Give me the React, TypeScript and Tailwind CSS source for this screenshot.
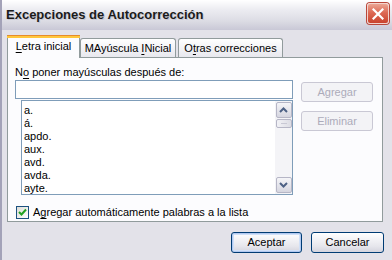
import React from "react";

const U = ({ children }: { children: React.ReactNode }) => (
  <span className="underline underline-offset-[2px] decoration-[1px]">{children}</span>
);

function ArrowUp() {
  return (
    <svg width="9" height="6" viewBox="0 0 9 6">
      <path d="M1 5 L4.5 1.5 L8 5" fill="none" stroke="#4D6185" strokeWidth="2" />
    </svg>
  );
}
function ArrowDown() {
  return (
    <svg width="9" height="6" viewBox="0 0 9 6">
      <path d="M1 1 L4.5 4.5 L8 1" fill="none" stroke="#4D6185" strokeWidth="2" />
    </svg>
  );
}

export default function App() {
  const items = ["a.", "á.", "apdo.", "aux.", "avd.", "avda.", "ayte."];
  return (
    <div
      className="w-[392px] h-[260px] overflow-hidden bg-[#E3E2E9] flex flex-col text-[11px] text-black border-l-[2px] border-l-[#A3A2B8]"
      style={{ fontFamily: '"Liberation Sans", Arial, sans-serif' }}
    >
      {/* Title bar */}
      <div className="h-[30px] flex items-center justify-between pl-[4px] pr-[3px] bg-[linear-gradient(to_bottom,#FFFFFF_0%,#EDEDF2_30%,#DCDCE4_70%,#C9C8D6_100%)]">
        <span
          className="text-[13px] font-bold text-[#1B1B1B]"
          style={{ textShadow: "1px 1px 0 #C8C8D2" }}
        >
          Excepciones de Autocorrección
        </span>
        <div className="w-[22px] h-[21px] mb-[3px] rounded-[3px] border border-[#F3D3CC] bg-[linear-gradient(to_bottom,#EBA593_0%,#DD6A55_45%,#C9432D_100%)] flex items-center justify-center shadow-[0_0_0_1px_#B9473A]">
          <svg width="12" height="12" viewBox="0 0 12 12">
            <path d="M1.5 1.5 L10.5 10.5 M10.5 1.5 L1.5 10.5" stroke="#FFFFFF" strokeWidth="2.2" strokeLinecap="square" />
          </svg>
        </div>
      </div>

      {/* Tabs */}
      <div className="mt-[5px] h-[22px] flex items-end pl-[5px]">
        <div className="relative z-10 -mb-[1px] h-[23px] w-[73px] bg-[#FCFCFE] border-x border-[#919B9C] flex flex-col">
          <div className="h-[1px] bg-[#E68B2C] -mx-[1px] rounded-t-[2px]" />
          <div className="h-[2px] bg-[#FFC73C] -mx-[1px]" />
          <div className="flex-1 flex items-center justify-center pb-[3px]">
            <span><U>L</U>etra inicial</span>
          </div>
        </div>
        <div className="h-[19px] w-[96px] ml-0 border border-b-0 border-[#919B9C] rounded-t-[3px] bg-[linear-gradient(to_bottom,#FFFFFF,#E8E8EE)] flex items-center justify-center">
          <span>MAyúscula <U>I</U>Nicial</span>
        </div>
        <div className="h-[19px] w-[105px] ml-[2px] border border-b-0 border-[#919B9C] rounded-t-[3px] bg-[linear-gradient(to_bottom,#FFFFFF,#E8E8EE)] flex items-center justify-center">
          <span>O<U>t</U>ras correcciones</span>
        </div>
      </div>

      {/* Panel */}
      <div className="ml-[5px] w-[376px] h-[165px] border border-[#919B9C] bg-[#FCFCFE] flex flex-col">
        <div className="mt-[8px] ml-[7px] h-[13px] leading-[13px]">
          N<U>o</U> poner mayúsculas después de:
        </div>
        <div className="flex mt-[1px]">
          <div className="ml-[7px] flex flex-col">
            <div className="w-[278px] h-[19px] border border-[#7F9DB9] bg-white" />
            <div className="ml-[6px] mt-[1px] w-[272px] h-[95px] border border-[#7F9DB9] bg-white flex">
              <div className="flex-1 pt-[3px] pl-[2px]">
                {items.map((it) => (
                  <div key={it} className="h-[13px] leading-[13px]">
                    {it}
                  </div>
                ))}
              </div>
              <div className="w-[17px] bg-[#F4F4F7] flex flex-col items-center py-[1px]">
                <div className="w-[16px] h-[16px] rounded-[2px] border border-[#B6B6C6] bg-[linear-gradient(to_bottom,#F5F5F8,#D6D6E0)] flex items-center justify-center">
                  <ArrowUp />
                </div>
                <div className="mt-[1px] w-[16px] h-[9px] rounded-[2px] border border-[#B6B6C6] bg-[linear-gradient(to_right,#F2F2F6,#DCDCE4)] flex flex-col items-center justify-center gap-[1px]">
                  <div className="w-[6px] h-[1px] bg-[#C8C8D4]" />
                </div>
                <div className="flex-1" />
                <div className="w-[16px] h-[16px] rounded-[2px] border border-[#B6B6C6] bg-[linear-gradient(to_bottom,#F5F5F8,#D6D6E0)] flex items-center justify-center">
                  <ArrowDown />
                </div>
              </div>
            </div>
          </div>
          <div className="ml-[8px] mt-[2px] flex flex-col gap-[9px]">
            <div className="w-[72px] h-[20px] rounded-[3px] border border-[#C9C8D4] bg-[#F3F3F6] text-[#ACABBA] flex items-center justify-center">
              Agregar
            </div>
            <div className="w-[72px] h-[20px] rounded-[3px] border border-[#C9C8D4] bg-[#F3F3F6] text-[#ACABBA] flex items-center justify-center">
              Eliminar
            </div>
          </div>
        </div>
        <div className="mt-[9px] ml-[8px] flex items-center">
          <div className="w-[13px] h-[13px] border border-[#1C5180] bg-[linear-gradient(135deg,#DCDCD7,#FFFFFF)] flex items-center justify-center">
            <svg width="9" height="9" viewBox="0 0 9 9">
              <path d="M1 4 L3.5 6.5 L8 1.5" fill="none" stroke="#21A121" strokeWidth="2" />
            </svg>
          </div>
          <span className="ml-[4px]">A<U>g</U>regar automáticamente palabras a la lista</span>
        </div>
      </div>

      {/* Bottom buttons */}
      <div className="mt-[10px] flex justify-end pr-[8px] gap-[9px]">
        <div className="w-[71px] h-[21px] rounded-[3px] border border-[#003C74] bg-[linear-gradient(to_bottom,#FFFFFF,#E6E6EC_70%,#D4D4DE)] shadow-[inset_0_0_0_1px_#B2C9F0,inset_0_0_0_2px_#D0E0F8] flex items-center justify-center">
          Aceptar
        </div>
        <div className="w-[73px] h-[21px] rounded-[3px] border border-[#003C74] bg-[linear-gradient(to_bottom,#FFFFFF,#E6E6EC_70%,#D4D4DE)] flex items-center justify-center">
          Cancelar
        </div>
      </div>
    </div>
  );
}
